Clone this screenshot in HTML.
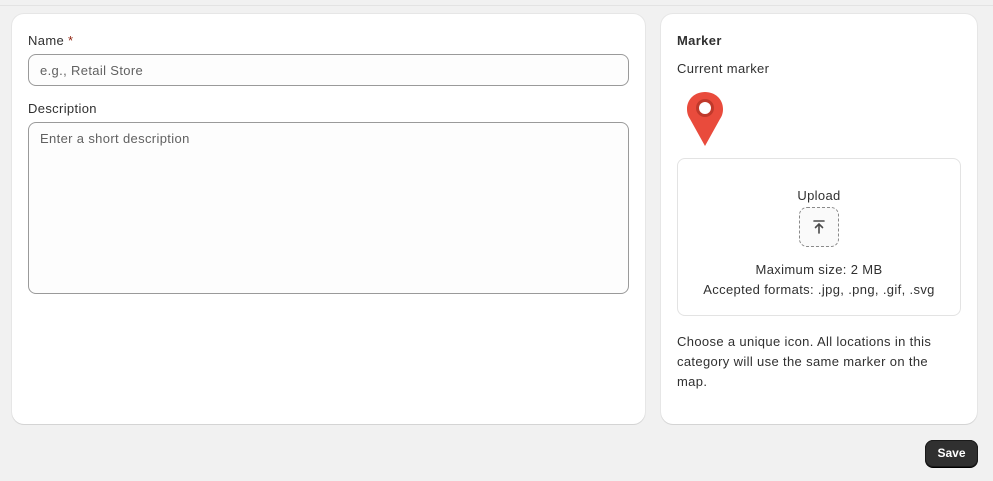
<!DOCTYPE html>
<html><head><style>
*{box-sizing:border-box;margin:0;padding:0}
body{width:993px;height:481px;background:#f1f1f1;font-family:"Liberation Sans",sans-serif;font-size:13px;letter-spacing:0.35px;color:#303030;position:relative;overflow:hidden}
.top{position:absolute;left:0;top:0;width:993px;height:6px;border-bottom:1px solid #e3e3e3;background:#f1f1f1}
.card{position:absolute;background:#fff;border-radius:12px;box-shadow:0 1px 0 #d4d4d4,0 0 0 1px #e6e6e6}
.t{position:absolute;white-space:nowrap;line-height:16px}
.inp{position:absolute;border:1px solid #9a9a9a;border-radius:8px;background:#fdfdfd;color:#616161;padding-left:11px}
</style></head><body>
<div class="top"></div>
<div class="card" style="left:12px;top:14px;width:633px;height:410px">
 <div class="t" style="left:16px;top:19px">Name <span style="color:#8e1f0b">*</span></div>
 <div class="inp" style="left:16px;top:40px;width:601px;height:32px;line-height:31px">e.g., Retail Store</div>
 <div class="t" style="left:16px;top:87px">Description</div>
 <div class="inp" style="left:16px;top:108px;width:601px;height:172px;padding-top:8px;line-height:16px">Enter a short description</div>
</div>
<div class="card" style="left:661px;top:14px;width:316px;height:410px">
 <div class="t" style="left:16px;top:19px;font-weight:bold">Marker</div>
 <div class="t" style="left:16px;top:47px">Current marker</div>
 <svg style="position:absolute;left:25px;top:77px" width="38" height="56" viewBox="0 0 38 56">
  <path d="M19 1C9 1 1 8 1 18c0 4 1 7 3 10l15 27 15-27c2-3 3-6 3-10C37 8 29 1 19 1z" fill="#e94b3c"/>
  <circle cx="19" cy="17" r="9" fill="#c0392b"/>
  <circle cx="19" cy="17" r="6" fill="#fff"/>
 </svg>
 <div style="position:absolute;left:16px;top:144px;width:284px;height:158px;border:1px solid #e3e3e3;border-radius:8px"></div>
 <div class="t" style="left:16px;width:284px;text-align:center;top:174px">Upload</div>
 <div style="position:absolute;left:138px;top:193px;width:40px;height:40px;border:1px dashed #8a8a8a;border-radius:8px;background:#fafafa">
  <svg width="38" height="38" viewBox="0 0 38 38" style="position:absolute;left:0;top:0"><path d="M14 13h10M19 25v-9M15.5 19.5 19 16l3.5 3.5" stroke="#4a4a4a" stroke-width="1.6" fill="none" stroke-linecap="round"/></svg>
 </div>
 <div class="t" style="left:16px;width:284px;text-align:center;top:248px">Maximum size: 2 MB</div>
 <div class="t" style="left:16px;width:284px;text-align:center;top:268px">Accepted formats: .jpg, .png, .gif, .svg</div>
 <div style="position:absolute;left:16px;top:318px;width:270px;line-height:20px">Choose a unique icon. All locations in this category will use the same marker on the map.</div>
</div>
<div style="position:absolute;left:925px;top:440px;width:53px;height:27px;background:#303030;border-radius:8px;box-shadow:0 0 0 1px #1a1a1a inset,0 1px 0 #000;color:#fff;font-weight:bold;font-size:12px;letter-spacing:0;line-height:27px;text-align:center">Save</div>
</body></html>
